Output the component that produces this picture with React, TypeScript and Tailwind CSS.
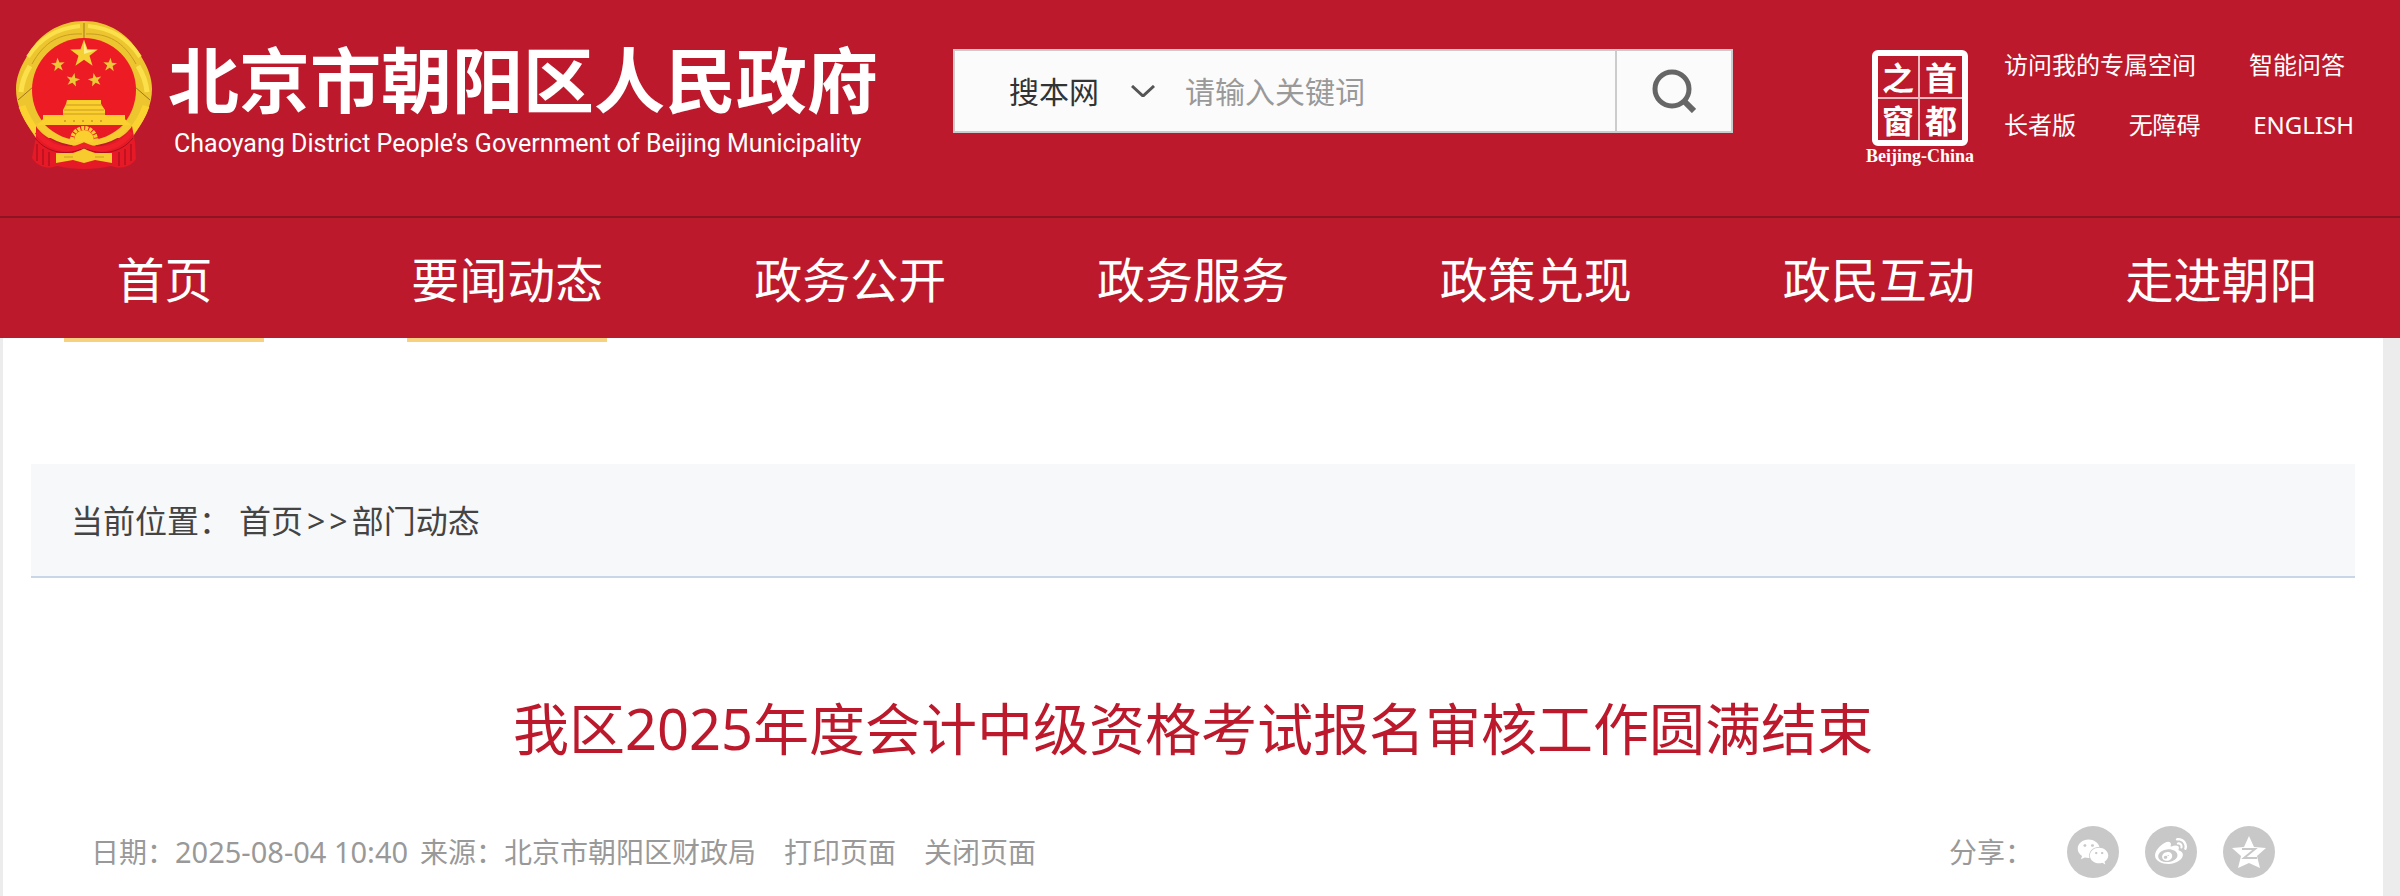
import { FaWeixin, FaWeibo } from 'react-icons/fa'

const navItems = ['首页', '要闻动态', '政务公开', '政务服务', '政策兑现', '政民互动', '走进朝阳']

const starPoints = '0,-10 2.4,-3.2 9.5,-3.1 3.8,1.2 5.9,8.1 0,4 -5.9,8.1 -3.8,1.2 -9.5,-3.1 -2.4,-3.2'

const smallStars = [
  { x: 42, y: 45, r: -5 },
  { x: 94, y: 45, r: 5 },
  { x: 57, y: 60, r: 12 },
  { x: 79, y: 60, r: -12 },
]

function Emblem() {
  return (
    <svg viewBox="0 0 136 150" className="h-[150px] w-[136px] shrink-0" aria-hidden="true">
      <path d="M20 118 C6 98 0 84 0 69 C0 58 4 48 10 38 C22 14 44 1 68 1 C92 1 114 14 126 38 C132 48 136 58 136 69 C136 84 130 98 116 118 Z" fill="#edc62f" />
      <path d="M12 37 C24 18 42 8 64 6 M124 37 C112 18 94 8 72 6" fill="none" stroke="#fbe04c" strokeWidth="4" />
      <path d="M16 44 C28 22 44 13 66 14 M120 44 C108 22 92 13 70 14" fill="none" stroke="#c99b25" strokeWidth="1" />
      <path d="M5 72 C6 62 9 54 14 46 M131 72 C130 62 127 54 122 46" fill="none" stroke="#fbe04c" strokeWidth="5" />
      <path d="M6 86 C10 98 16 106 21 112 M130 86 C126 98 120 106 115 112" fill="none" stroke="#fbd22f" strokeWidth="7" />
      <path d="M2 80 17 67 M134 80 119 67 M68 3 V18" stroke="#9e7420" strokeWidth="1" />
      <circle cx="68" cy="70" r="52" fill="#ed1c24" />
      <polygon points={starPoints} transform="translate(68 34) scale(1.45)" fill="#f5d033" />
      <polygon points="0,-10 2.4,-3.2 9.5,-3.1 0,0" transform="translate(68 34) scale(1.2)" fill="#fdf08a" />
      {smallStars.map((s) => (
        <polygon
          key={`${s.x}-${s.y}`}
          points={starPoints}
          transform={`translate(${s.x} ${s.y}) rotate(${s.r}) scale(.72)`}
          fill="#ecc936"
        />
      ))}
      <path d="M20 106 C26 116 44 128 68 128 C92 128 110 116 116 106 L119 122 L120 139 C112 150 100 148 95 146 C78 150 58 150 41 146 C36 148 24 150 16 138 L20 116 Z" fill="#e51a26" />
      <path d="M24 102 C32 116 50 122 68 122 C86 122 104 116 112 102" fill="none" stroke="#f5cb30" strokeWidth="8" />
      <path d="M51 80 H85 V84 L89 90 V95 H109 V99 L114 105 H22 L27 99 V95 H47 V90 L50 84 Z" fill="#fbcf2d" />
      <path d="M50 85 H86 M48 90 H88 M47 94 H89" stroke="#c99b25" strokeWidth="1" />
      <path d="M48 101 H88" stroke="#d7a324" strokeWidth="2" strokeDasharray="2 7" />
      <path d="M29 105 H107 C98 114 84 121 68 121 C52 121 38 114 29 105 Z" fill="#e81b25" />
      <circle cx="68" cy="120" r="10" fill="#fbcf2d" />
      <path d="M56 120 A12 12 0 0 1 80 120" fill="none" stroke="#fbcf2d" strokeWidth="4" strokeDasharray="3 1" />
      <path d="M52 120 C58 126 63 124 68 123 C73 124 78 126 84 120" fill="none" stroke="#f5cb30" strokeWidth="4" />
      <path d="M21 112 C30 126 50 134 68 125 C86 134 106 126 115 112" fill="none" stroke="#ef2029" strokeWidth="5" />
      <path d="M19 118 C32 134 52 136 68 128 C84 136 104 134 117 118" fill="none" stroke="#a90d1c" strokeWidth="1" />
      <path d="M21 124 V141 M27 129 V145 M33 132 V146 M115 124 V141 M109 129 V145 M103 132 V146" stroke="#c01220" strokeWidth="2" />
      <path d="M40 133 H57 L68 129 L79 133 H96 V143 L79 140 L68 143 L57 140 L40 143 Z" fill="#f7cb2e" />
      <path d="M48 137 H57 M79 137 H88" stroke="#c99b25" strokeWidth="1" />
    </svg>
  )
}

function Seal() {
  return (
    <a href="#" className="flex w-28 shrink-0 flex-col items-center text-white">
      <span className="grid size-24 grid-cols-2 rounded-md border-6 border-white font-['Noto_Sans_CJK_SC',sans-serif] text-[32px] leading-10 font-bold">
        <span className="border-r-2 border-b-2 border-white/70 text-center">之</span>
        <span className="border-b-2 border-white/70 text-center">首</span>
        <span className="border-r-2 border-white/70 text-center">窗</span>
        <span className="text-center">都</span>
      </span>
      <span className="font-['Liberation_Serif',serif] text-lg leading-5 font-bold">Beijing-China</span>
    </a>
  )
}

function SearchBox() {
  return (
    <form className="flex h-[84px] w-[780px] border-2 border-[#ccc] bg-[#fbfbfb] text-[30px]" onSubmit={(e) => e.preventDefault()}>
      <div className="relative ml-[54px] flex items-center">
        <select aria-label="搜索范围" className="h-full w-[156px] appearance-none bg-transparent text-[#333]">
          <option>搜本网</option>
        </select>
        <svg viewBox="0 0 24 12" className="pointer-events-none absolute right-[10px] h-3 w-6" fill="none" stroke="#555" strokeWidth="3">
          <path d="M1 1 12 11 23 1" />
        </svg>
      </div>
      <input aria-label="关键词" placeholder="请输入关键词" className="ml-5 min-w-0 flex-1 bg-transparent outline-none placeholder:text-[#999]" />
      <button aria-label="搜索" className="flex w-[116px] items-center justify-center border-l-2 border-[#ccc]">
        <svg viewBox="0 0 44 44" className="size-11" fill="none" stroke="#666" strokeWidth="5">
          <circle cx="20" cy="20" r="17" />
          <path d="M32 32 42 42" strokeWidth="6" />
        </svg>
      </button>
    </form>
  )
}

function QzoneIcon() {
  return (
    <svg viewBox="0 0 36 34" className="h-[34px] w-9" aria-hidden="true">
      <path d="M18 1 L23 12 L35 13 L26 21 L29 33 L18 28 L7 33 L10 21 L1 13 L13 12 Z" fill="#fff" />
      <path d="M11 14 H24 L13 23 H26" fill="none" stroke="#c8c8c8" strokeWidth="2" />
    </svg>
  )
}

export default function App() {
  return (
    <div className="min-h-screen bg-[#ececec] font-['Noto_Sans','Noto_Sans_CJK_SC',sans-serif]">
      <header className="bg-[#bc1a2c] text-white">
        <div className="flex h-[216px] items-start pl-4">
          <a href="#" className="mt-5 flex shrink-0">
            <Emblem />
            <span className="ml-4 flex w-[710px] flex-col pt-4">
              <span className="font-['Noto_Sans_CJK_SC',sans-serif] text-[71px] leading-[80px] font-bold">北京市朝阳区人民政府</span>
              <span className="mt-3 ml-[6px] font-[Roboto,sans-serif] text-[25px] leading-8 whitespace-nowrap">
                Chaoyang District People’s Government of Beijing Municipality
              </span>
            </span>
          </a>
          <div className="mt-[49px] ml-[75px]">
            <SearchBox />
          </div>
          <div className="mt-[50px] mr-[46px] ml-auto flex gap-7">
            <Seal />
            <div className="-mt-[3px] flex w-[350px] flex-col gap-6 text-2xl leading-9">
              <div className="flex justify-between pr-[9px]">
                <a href="#">访问我的专属空间</a>
                <a href="#">智能问答</a>
              </div>
              <div className="flex justify-between">
                <a href="#">长者版</a>
                <a href="#">无障碍</a>
                <a href="#">ENGLISH</a>
              </div>
            </div>
          </div>
        </div>
        <nav className="grid h-[122px] grid-cols-7 border-t-2 border-[#8f1423] text-5xl">
          {navItems.map((item) => (
            <a key={item} href="#" className="flex items-center justify-center pt-1 pr-[14px]">
              {item}
            </a>
          ))}
        </nav>
      </header>

      <main className="mr-[17px] ml-[3px] min-h-[558px] bg-white">
        <div className="-mr-[17px] -ml-[3px] grid grid-cols-7">
          {navItems.slice(0, 2).map((item) => (
            <div key={item} className="flex justify-center pr-[14px]">
              <div className="h-1 w-[200px] bg-[#f7d17f]" />
            </div>
          ))}
        </div>
        <div className="mx-7 mt-[122px] flex h-[114px] items-center border-b-2 border-[#c8d6e8] bg-[#f6f8fa] px-10 pt-[2px] text-[32px] text-[#444]">
          <span className="mr-2">当前位置：</span>
          <a href="#">首页</a>
          <span className="mx-1">&gt;</span>
          <span className="mr-1">&gt;</span>
          <a href="#">部门动态</a>
        </div>
        <h1 className="mt-[108px] text-center text-[56px] leading-[84px] text-[#bc1a2c]">
          我区2025年度会计中级资格考试报名审核工作圆满结束
        </h1>
        <div className="mt-[56px] mr-[108px] ml-[88px] flex h-[52px] items-center text-[28px] leading-10 text-[#999]">
          <span>日期：</span>
          <span className="mr-3 text-[29px]">2025-08-04 10:40</span>
          <span>来源：北京市朝阳区财政局</span>
          <button className="ml-7">打印页面</button>
          <button className="ml-7">关闭页面</button>
          <span className="mr-[34px] ml-auto">分享：</span>
          <div className="flex gap-[26px] text-white">
            <button aria-label="微信" className="flex size-[52px] items-center justify-center rounded-full bg-[#c8c8c8]">
              <FaWeixin className="size-8" />
            </button>
            <button aria-label="微博" className="flex size-[52px] items-center justify-center rounded-full bg-[#c8c8c8]">
              <FaWeibo className="size-8" />
            </button>
            <button aria-label="QQ空间" className="flex size-[52px] items-center justify-center rounded-full bg-[#c8c8c8]">
              <QzoneIcon />
            </button>
          </div>
        </div>
      </main>
    </div>
  )
}
